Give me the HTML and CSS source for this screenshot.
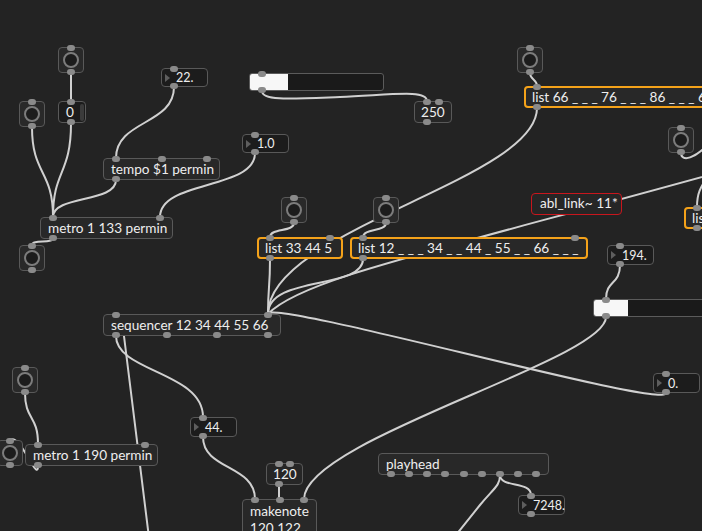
FILE: index.html
```
<!DOCTYPE html>
<html>
<head>
<meta charset="utf-8">
<title>Patcher</title>
<link rel="stylesheet" href="styles.css">
</head>
<body>
<div class="patcher">
  <svg class="cords" width="702" height="531" viewBox="0 0 702 531">
    <path d="M71 73 L71 101"/>
    <path d="M32 127 C32 175, 53 170, 53 217"/>
    <path d="M71 123 C71 175, 53 170, 53 217"/>
    <path d="M174 87 C174 125, 116 120, 116 158"/>
    <path d="M116 180 C116 203, 53 195, 53 217"/>
    <path d="M255 153 C255 190, 160 180, 160 217"/>
    <path d="M53 238 C53 244, 32 239, 32 245"/>
    <path d="M262 91 C262 101, 290 99, 340 97 S427 89, 427 101"/>
    <path d="M530 73 C530 80, 537 79, 537 86"/>
    <path d="M537 108 C537 180, 268 230, 268 314"/>
    <path d="M270 259 C270 290, 268 285, 268 314"/>
    <path d="M363 259 C363 290, 268 275, 268 314"/>
    <path d="M268 314 C300 280, 420 255, 720 172"/>
    <path d="M666 393 C666 410, 268 298, 268 314"/>
    <path d="M620 265 C620 285, 606 280, 606 299"/>
    <path d="M606 317 C606 360, 304 440, 304 499"/>
    <path d="M116 336 C116 372, 203 372, 203 417"/>
    <path d="M153 570 L122 320"/>
    <path d="M25 393 C25 420, 38 415, 38 444"/>
    <path d="M38 466 C38 484, 20 432, 10 440"/>
    <path d="M203 437 C203 470, 255 465, 255 499"/>
    <path d="M279 485 L279 499"/>
    <path d="M500 475 C500 488, 531 481, 531 495"/>
    <path d="M500 475 C500 486, 494 488, 480 505 L448 545"/>
    <path d="M294 223 C294 232, 270 228, 270 237"/>
    <path d="M386 223 C386 232, 363 228, 363 237"/>
    <path d="M681 153 C681 162, 695 160, 712 140"/>
    <path d="M697 207 C697 190, 702 186, 712 170"/>
  </svg>

  <!-- buttons -->
  <div class="node btn p-btn1"><div class="ports in"><i></i></div><span class="ring"></span><div class="ports out"><i></i></div></div>
  <div class="node btn p-btn3"><div class="ports in"><i></i></div><span class="ring"></span><div class="ports out"><i></i></div></div>
  <div class="node btn p-btn7"><div class="ports in"><i></i></div><span class="ring"></span><div class="ports out"><i></i></div></div>
  <div class="node btn p-btn11"><div class="ports in"><i></i></div><span class="ring"></span><div class="ports out"><i></i></div></div>
  <div class="node btn p-btn12"><div class="ports in"><i></i></div><span class="ring"></span><div class="ports out"><i></i></div></div>
  <div class="node btn p-btn16"><div class="ports in"><i></i></div><span class="ring"></span><div class="ports out"><i></i></div></div>
  <div class="node btn p-btn17"><div class="ports in"><i></i></div><span class="ring"></span><div class="ports out"><i></i></div></div>
  <div class="node btn p-btn24"><div class="ports in"><i></i></div><span class="ring"></span><div class="ports out"><i></i></div></div>
  <div class="node btn p-btn26"><div class="ports in"><i></i></div><span class="ring"></span><div class="ports out"><i></i></div></div>

  <!-- number boxes -->
  <div class="node num int p-num0"><div class="ports in"><i></i></div><span class="txt">0</span><span class="knob"></span><div class="ports out"><i></i></div></div>
  <div class="node num plain p-num250"><div class="ports in"><i></i><i></i></div><span class="txt">250</span><div class="ports out"><i></i></div></div>
  <div class="node num plain p-num120"><div class="ports in"><i></i><i></i></div><span class="txt">120</span><div class="ports out"><i></i></div></div>

  <div class="node flo p-flo22"><div class="ports in"><i></i></div><span class="tri"></span><span class="txt">22.</span><div class="ports out"><i></i></div></div>
  <div class="node flo p-flo1"><div class="ports in"><i></i></div><span class="tri"></span><span class="txt">1.0</span><div class="ports out"><i></i></div></div>
  <div class="node flo p-flo194"><div class="ports in"><i></i></div><span class="tri"></span><span class="txt">194.</span><div class="ports out"><i></i></div></div>
  <div class="node flo p-flo0"><div class="ports in"><i></i></div><span class="tri"></span><span class="txt">0.</span><div class="ports out"><i></i></div></div>
  <div class="node flo p-flo44"><div class="ports in"><i></i></div><span class="tri"></span><span class="txt">44.</span><div class="ports out"><i></i></div></div>
  <div class="node flo p-flo7248"><div class="ports in"><i></i></div><span class="tri"></span><span class="txt">7248.</span><div class="ports out"><i></i></div></div>

  <!-- sliders -->
  <div class="node slider p-sliderA"><span class="fill" style="width:38px"></span><div class="ports in"><i></i></div><div class="ports out"><i></i></div></div>
  <div class="node slider p-sliderB"><span class="fill" style="width:34px"></span><div class="ports in"><i></i></div><div class="ports out"><i></i></div></div>

  <!-- objects -->
  <div class="node obj p-tempo"><div class="ports in"><i></i><i></i><i></i></div>tempo $1 permin<div class="ports out"><i></i></div></div>
  <div class="node obj p-metro133"><div class="ports in"><i></i><i></i></div>metro 1 133 permin<div class="ports out"><i></i></div></div>
  <div class="node obj hl p-list33"><div class="ports in"><i></i><i></i></div>list 33 44 5<div class="ports out"><i></i></div></div>
  <div class="node obj hl p-list12"><div class="ports in"><i></i><i></i></div>list 12 _ _ _ 34 _ _ 44 _ 55 _ _ 66 _ _ _<div class="ports out"><i></i></div></div>
  <div class="node obj hl p-list66"><div class="ports in"><i></i><i></i></div>list 66 _ _ _ 76 _ _ _ 86 _ _ _ 66 _ _ _<div class="ports out"><i></i></div></div>
  <div class="node obj hl p-lis"><div class="ports in"><i></i><i></i></div>list 1 2<div class="ports out"><i></i></div></div>
  <div class="node obj err p-abl">abl_link~ 11*</div>
  <div class="node obj p-seq"><div class="ports in"><i></i><i></i></div>sequencer 12 34 44 55 66<div class="ports out"><i></i><i></i><i></i><i></i></div></div>
  <div class="node obj p-metro190"><div class="ports in"><i></i><i></i></div>metro 1 190 permin<div class="ports out"><i></i></div></div>
  <div class="node obj multi p-makenote"><div class="ports in"><i></i><i></i><i></i></div>makenote<br>120 122<div class="ports out"><i></i><i></i></div></div>
  <div class="node obj p-playhead">playhead<div class="ports out"><i></i><i></i><i></i><i></i><i></i><i></i><i></i><i></i><i></i></div></div>
</div>
</body>
</html>
```

FILE: styles.css
```
html, body {
  margin: 0;
  padding: 0;
  background: #232323;
}

.patcher {
  position: relative;
  width: 702px;
  height: 531px;
  overflow: hidden;
  background: #232323;
  font-family: "Lato", "Liberation Sans", sans-serif;
  color: #eeeeee;
}

.cords {
  position: absolute;
  left: 0;
  top: 0;
}

.cords path {
  fill: none;
  stroke: #d0d0d0;
  stroke-width: 2;
  stroke-linecap: round;
}

.node {
  position: absolute;
  box-sizing: border-box;
  border: 1px solid #595959;
  border-radius: 4px;
  background: #282828;
}

/* ports */
.ports {
  position: absolute;
  left: 8px;
  right: 8px;
  display: flex;
  justify-content: space-between;
  pointer-events: none;
}
.ports.in { top: -3px; }
.ports.out { bottom: -3px; }
.ports i {
  display: block;
  width: 8px;
  height: 6px;
  border-radius: 4px;
  background: #8a8a8a;
}

/* buttons */
.btn {
  width: 26px;
  height: 26px;
  display: flex;
  align-items: center;
  justify-content: center;
  background: #292929;
}
.btn .ports {
  left: 0;
  right: 0;
  justify-content: center;
}
.btn .ring {
  display: block;
  box-sizing: border-box;
  width: 16px;
  height: 16px;
  border-radius: 50%;
  border: 2px solid #7c7c7c;
  background: #1c1c1c;
}

/* objects */
.obj {
  height: 22px;
  padding: 0 7px;
  font-size: 13.6px;
  line-height: 20px;
  white-space: nowrap;
  overflow: visible;
}
.obj.hl {
  border: 2px solid #f4a21a;
  line-height: 18px;
  padding: 0 6px;
}
.obj.hl .ports { left: 7px; right: 7px; }
.obj.hl .ports.in { top: -4px; }
.obj.hl .ports.out { bottom: -4px; }
.obj.err {
  border: 1.5px solid #c8161d;
  line-height: 19px;
  padding: 0 8px;
  background: #262626;
}
.obj.multi {
  height: 45px;
  line-height: 17px;
  padding-top: 3px;
}

/* number boxes */
.num {
  height: 22px;
  display: flex;
  align-items: center;
  font-size: 13.6px;
  padding-left: 6px;
  white-space: nowrap;
}
.num.int { background: #1c1c1c; padding-left: 7px; }
.num.plain { background: #262626; }
.num .knob {
  margin-left: auto;
  margin-right: 1px;
  width: 4px;
  height: 17px;
  border-radius: 2px;
  background: #3b3b3b;
}

.flo {
  height: 20px;
  display: flex;
  align-items: center;
  background: #1c1c1c;
  font-size: 12.5px;
  white-space: nowrap;
  overflow: visible;
}
.flo .tri {
  display: block;
  width: 0;
  height: 0;
  margin-left: 3px;
  border-left: 5px solid #5e5e5e;
  border-top: 4px solid transparent;
  border-bottom: 4px solid transparent;
}
.flo .txt { margin-left: 6px; }

/* sliders */
.slider {
  height: 18px;
  background: #1a1a1a;
  border-color: #5b5b5b;
  border-radius: 3px;
  overflow: visible;
}
.slider .fill {
  display: block;
  height: 100%;
  background: #f7f7f7;
  border-radius: 2px 0 0 2px;
}
.slider .ports { left: 8px; right: auto; }

/* positions on the canvas */
.p-btn1 { left: 58px; top: 47px; }
.p-btn3 { left: 19px; top: 101px; }
.p-btn7 { left: 19px; top: 245px; }
.p-btn11 { left: 281px; top: 197px; }
.p-btn12 { left: 373px; top: 197px; }
.p-btn16 { left: 517px; top: 47px; }
.p-btn17 { left: 668px; top: 127px; }
.p-btn24 { left: 12px; top: 367px; }
.p-btn26 { left: -3px; top: 440px; }

.p-num0 { left: 58px; top: 101px; width: 28px; }
.p-num250 { left: 414px; top: 101px; width: 38px; }
.p-num120 { left: 266px; top: 463px; width: 37px; }

.p-flo22 { left: 161px; top: 68px; width: 47px; height: 19px; }
.p-flo1 { left: 242px; top: 134px; width: 47px; height: 19px; }
.p-flo194 { left: 607px; top: 245px; width: 47px; }
.p-flo0 { left: 653px; top: 373px; width: 47px; }
.p-flo44 { left: 190px; top: 417px; width: 47px; }
.p-flo7248 { left: 518px; top: 495px; width: 47px; }

.p-sliderA { left: 249px; top: 73px; width: 135px; }
.p-sliderB { left: 593px; top: 299px; width: 130px; }

.p-tempo { left: 103px; top: 158px; width: 117px; }
.p-metro133 { left: 40px; top: 217px; width: 133px; }
.p-list33 { left: 257px; top: 237px; width: 86px; }
.p-list12 { left: 350px; top: 237px; width: 238px; }
.p-list66 { left: 524px; top: 86px; width: 250px; }
.p-lis { left: 684px; top: 207px; width: 70px; }
.p-abl { left: 531px; top: 193px; width: 91px; }
.p-seq { left: 103px; top: 314px; width: 178px; }
.p-metro190 { left: 25px; top: 444px; width: 133px; }
.p-makenote { left: 242px; top: 499px; width: 75px; }
.p-playhead { left: 378px; top: 453px; width: 171px; }
```
